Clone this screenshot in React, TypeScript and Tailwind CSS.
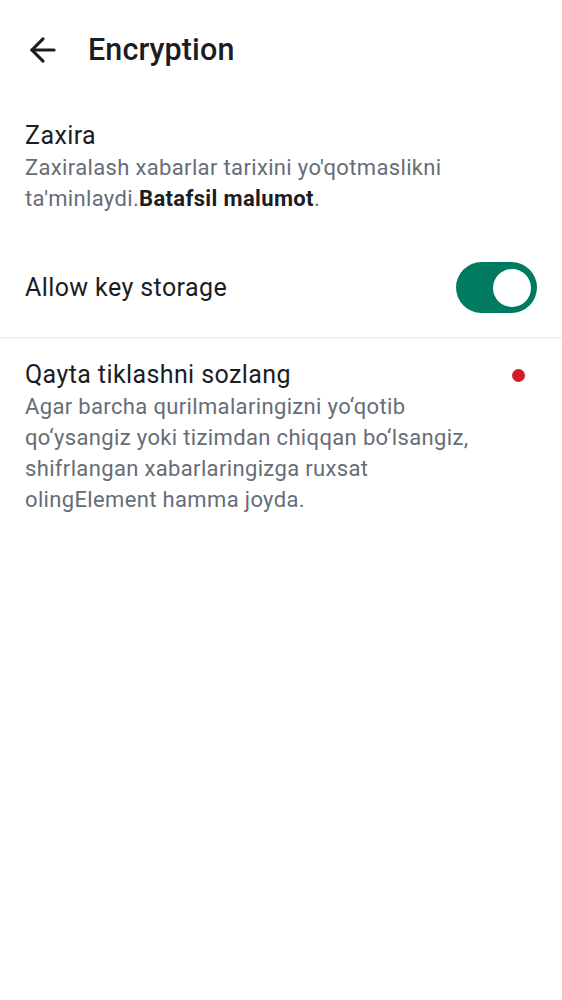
import { ArrowLeft } from "lucide-react";

const font = { fontFamily: "Roboto, 'Noto Sans', sans-serif" };

export default function App() {
  return (
    <div className="min-h-[1000px] w-[562px] bg-white text-[#1b1d22]" style={font}>
      {/* Top bar */}
      <div className="flex h-[100px] items-center pl-[24px]">
        <ArrowLeft className="h-[38px] w-[38px]" strokeWidth={2} />
        <h1 className="ml-[26px] text-[30.5px] font-medium tracking-[0.1px]">Encryption</h1>
      </div>

      {/* Backup */}
      <div className="px-[25px] pt-[19px]">
        <p className="text-[25px] leading-[33px] tracking-[0.4px]">Zaxira</p>
        <p className="text-[22px] leading-[31px] tracking-[0.35px] text-[#656d77]">
          Zaxiralash xabarlar tarixini yo'qotmaslikni ta'minlaydi.
          <span className="font-bold text-[#1b1d22]">Batafsil malumot</span>.
        </p>
      </div>

      {/* Key storage */}
      <div className="flex items-center justify-between pl-[25px] pr-[25px] pt-[48px] pb-[24px]">
        <p className="text-[25px] leading-[33px] tracking-[0.4px]">Allow key storage</p>
        <div className="flex h-[51px] w-[81px] items-center justify-end rounded-full bg-[#007a61] pr-[6px]">
          <div className="h-[38px] w-[38px] rounded-full bg-white" />
        </div>
      </div>

      <div className="h-[2px] bg-[#f0f1f5]" />

      {/* Recovery */}
      <div className="flex items-start pl-[25px] pr-[37px] pt-[19px]">
        <div className="flex-1">
          <p className="text-[25px] leading-[33px] tracking-[0.4px]">Qayta tiklashni sozlang</p>
          <p className="w-[460px] text-[22px] leading-[31px] tracking-[0.35px] text-[#656d77]">
            Agar barcha qurilmalaringizni yo‘qotib qo‘ysangiz yoki tizimdan chiqqan bo‘lsangiz, shifrlangan xabarlaringizga ruxsat olingElement hamma joyda.
          </p>
        </div>
        <div className="mt-[11px] h-[13px] w-[13px] rounded-full bg-[#d51928]" />
      </div>
    </div>
  );
}
